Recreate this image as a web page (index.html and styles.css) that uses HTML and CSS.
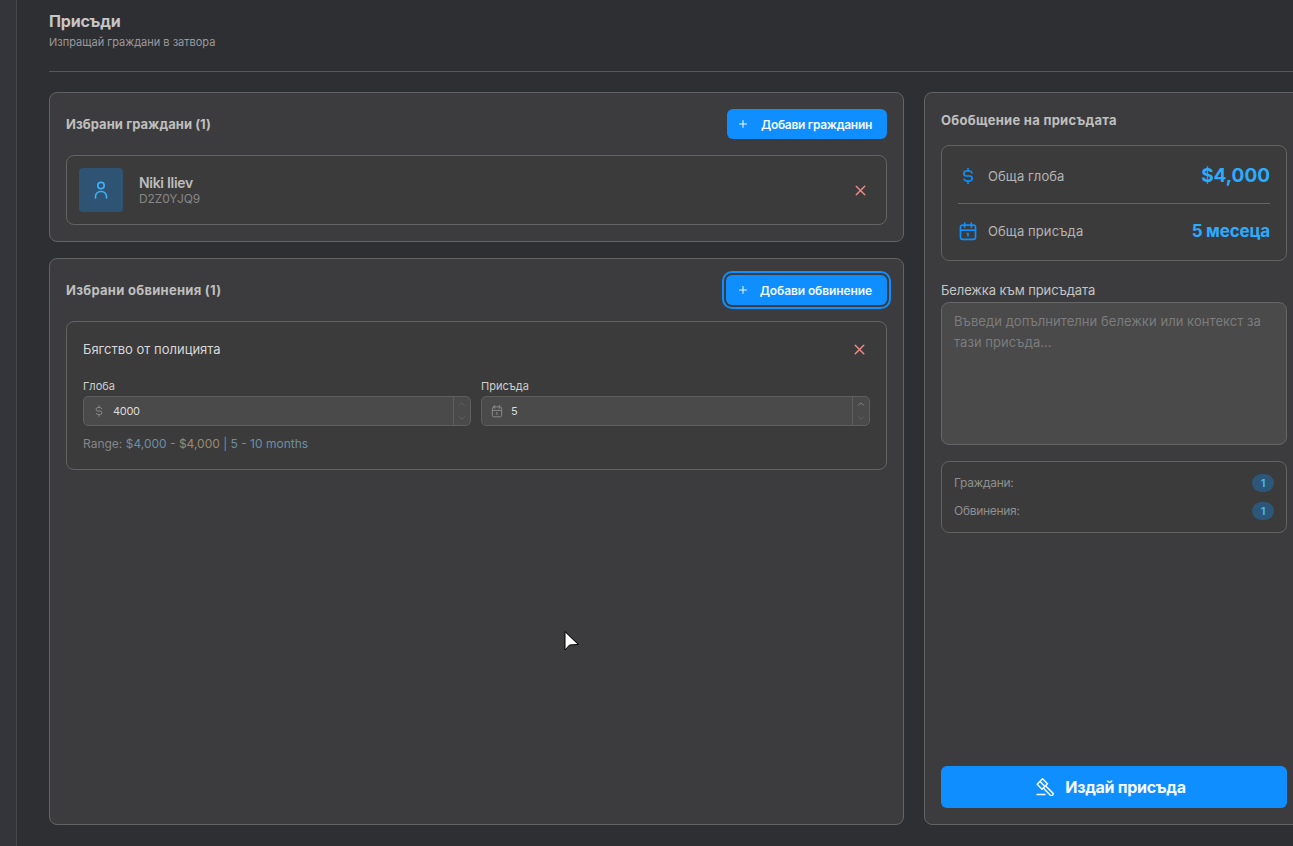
FILE: index.html
```html
<!DOCTYPE html>
<html lang="bg">
<head>
    <meta charset="UTF-8">
    <title>Присъди</title>
    <link rel="stylesheet" href="styles.css">
</head>
<body>
    <div class="rail"></div>
    <main class="page">
        <header class="page-head">
            <h1>Присъди</h1>
            <p>Изпращай граждани в затвора</p>
        </header>

        <div class="columns">
            <div class="left-col">
                <!-- Citizens -->
                <section class="card citizens-card">
                    <div class="card-head">
                        <h2>Избрани граждани (1)</h2>
                        <button class="add-btn">
                            <svg viewBox="0 0 24 24"><path d="M12 5v14M5 12h14"/></svg>
                            Добави гражданин
                        </button>
                    </div>
                    <div class="citizen">
                        <div class="avatar">
                            <svg viewBox="0 0 20 20"><circle cx="10" cy="5.6" r="3.2"/><path d="M4.5 18v-1.5a5 5 0 0 1 5-5h1a5 5 0 0 1 5 5V18"/></svg>
                        </div>
                        <div class="citizen-info">
                            <div class="citizen-name">Niki Iliev</div>
                            <div class="citizen-id">D2Z0YJQ9</div>
                        </div>
                        <svg class="remove" viewBox="0 0 24 24"><path d="M18 6 6 18M6 6l12 12"/></svg>
                    </div>
                </section>

                <!-- Charges -->
                <section class="card charges-card">
                    <div class="card-head">
                        <h2>Избрани обвинения (1)</h2>
                        <button class="add-btn focused">
                            <svg viewBox="0 0 24 24"><path d="M12 5v14M5 12h14"/></svg>
                            Добави обвинение
                        </button>
                    </div>
                    <div class="charge">
                        <div class="charge-head">
                            <span class="charge-title">Бягство от полицията</span>
                            <svg class="remove" viewBox="0 0 24 24"><path d="M18 6 6 18M6 6l12 12"/></svg>
                        </div>
                        <div class="charge-fields">
                            <div class="field">
                                <label>Глоба</label>
                                <div class="number-input">
                                    <svg class="input-icon" viewBox="0 0 24 24"><path d="M16.7 8A3 3 0 0 0 14 6h-4a3 3 0 0 0 0 6h4a3 3 0 0 1 0 6h-4a3 3 0 0 1-2.7-2"/><path d="M12 3v3m0 12v3"/></svg>
                                    <span class="input-value">4000</span>
                                    <div class="stepper">
                                        <span><svg viewBox="0 0 24 24"><path d="m6 15 6-6 6 6"/></svg></span>
                                        <span><svg viewBox="0 0 24 24"><path d="m6 9 6 6 6-6"/></svg></span>
                                    </div>
                                </div>
                            </div>
                            <div class="field">
                                <label>Присъда</label>
                                <div class="number-input">
                                    <svg class="input-icon" viewBox="0 0 24 24"><rect x="4" y="5" width="16" height="17" rx="2.5"/><path d="M16 2.5v5M8 2.5v5M4 11h16M11 15h1v3"/></svg>
                                    <span class="input-value">5</span>
                                    <div class="stepper">
                                        <span><svg class="on" viewBox="0 0 24 24"><path d="m6 15 6-6 6 6"/></svg></span>
                                        <span><svg viewBox="0 0 24 24"><path d="m6 9 6 6 6-6"/></svg></span>
                                    </div>
                                </div>
                            </div>
                        </div>
                        <div class="range">Range: <span class="blue">$4,000</span> - <span class="orange">$4,000</span> <span class="blue">| 5 - 10 months</span></div>
                    </div>
                </section>
            </div>

            <!-- Summary -->
            <aside class="card summary-card">
                <h2>Обобщение на присъдата</h2>
                <div class="totals">
                    <div class="total-row">
                        <svg viewBox="0 0 24 24"><path d="M16.7 8A3 3 0 0 0 14 6h-4a3 3 0 0 0 0 6h4a3 3 0 0 1 0 6h-4a3 3 0 0 1-2.7-2"/><path d="M12 3v3m0 12v3"/></svg>
                        <span class="total-label">Обща глоба</span>
                        <span class="total-value big">$4,000</span>
                    </div>
                    <div class="total-row">
                        <svg viewBox="0 0 24 24"><rect x="3" y="5" width="18" height="17" rx="2.5"/><path d="M16 2.5v5M8 2.5v5M3 11h18M11 15h1v3"/></svg>
                        <span class="total-label">Обща присъда</span>
                        <span class="total-value">5 месеца</span>
                    </div>
                </div>

                <div class="note-label">Бележка към присъдата</div>
                <textarea class="note" placeholder="Въведи допълнителни бележки или контекст за тази присъда..."></textarea>

                <div class="counts">
                    <div class="count-row"><span>Граждани:</span><b class="badge">1</b></div>
                    <div class="count-row"><span>Обвинения:</span><b class="badge">1</b></div>
                </div>

                <button class="submit-btn">
                    <svg viewBox="0 0 18 18"><path d="M6.5.8l5 5-5.5 5.4-4.8-5z"/><path d="M4 3.5l5 5"/><path d="M9.5 7.8l7.1 7.1a1.6 1.6 0 0 1-2.3 2.3L7.3 10"/><path d="M1 16.5h8"/></svg>
                    Издай присъда
                </button>
            </aside>
        </div>
    </main>

    <!-- mouse pointer caught in the screenshot -->
    <svg class="cursor" viewBox="0 0 16 21"><path d="M1 1v18l4.5-5 8.5-.5z" fill="#fff" stroke="#000" stroke-width="1"/></svg>
</body>
</html>
```

FILE: styles.css
```css
:root {
    --blue: #0f8fff;
    --light-blue: #2bacff;
    --line: #636363;
    --text: #c4c4c4;
    --muted: #8e8e8e;
    --panel: #3c3c3e;
    --inner: #3b3b3b;
    --field: #4a4a4a;
}

* {
    margin: 0;
    padding: 0;
    box-sizing: border-box;
    font-family: 'Inter', 'Noto Sans', sans-serif;
}

body {
    width: 1293px;
    height: 846px;
    overflow: hidden;
    display: flex;
    background: #2e2f33;
    color: var(--text);
}

svg {
    fill: none;
    stroke: currentColor;
    stroke-width: 2;
    stroke-linecap: round;
    stroke-linejoin: round;
    flex-shrink: 0;
}

.rail {
    width: 17px;
    flex-shrink: 0;
    background: #33353a;
    border-right: 1px solid #45464a;
}

.page {
    flex-shrink: 0;
    width: 1287px;
    padding: 13px 0 21px 32px;
    display: flex;
    flex-direction: column;
}

.page-head {
    height: 59px;
    border-bottom: 1px solid #57585b;
}

.page-head h1 {
    font-size: 16px;
    line-height: 17px;
    font-weight: 700;
    letter-spacing: -0.2px;
    color: #c6c6c6;
}

.page-head p {
    margin-top: 4px;
    font-size: 11px;
    line-height: 16px;
    color: #9a9a9c;
}

.columns {
    margin-top: 20px;
    display: flex;
    gap: 20px;
    height: 733px;
}

.left-col {
    width: 855px;
    display: flex;
    flex-direction: column;
    gap: 16px;
}

.card {
    background: var(--panel);
    border: 1px solid var(--line);
    border-radius: 8px;
    padding: 16px;
}

.card h2 {
    font-size: 13px;
    font-weight: 700;
    letter-spacing: 0.28px;
    color: #bfbfbf;
}

.citizens-card h2 {
    letter-spacing: 0.05px;
}

.card-head {
    display: flex;
    align-items: center;
    justify-content: space-between;
    margin-bottom: 16px;
}

.add-btn {
    display: flex;
    align-items: center;
    gap: 12px;
    height: 30px;
    padding: 0 15px 0 10px;
    border: none;
    border-radius: 6px;
    background: var(--blue);
    color: #f2f8ff;
    font-size: 12px;
    font-weight: 600;
    letter-spacing: -0.3px;
}

.add-btn svg {
    width: 12px;
    height: 12px;
    stroke-width: 2;
}

.add-btn.focused {
    gap: 11px;
    padding-left: 11px;
    letter-spacing: -0.1px;
    outline: 2px solid var(--blue);
    outline-offset: 2px;
}

.citizen {
    display: flex;
    align-items: center;
    height: 70px;
    padding: 0 12px;
    background: var(--inner);
    border: 1px solid var(--line);
    border-radius: 8px;
}

.avatar {
    width: 44px;
    height: 44px;
    border-radius: 4px;
    background: #2f5473;
    color: #3fb0f7;
    display: flex;
    align-items: center;
    justify-content: center;
}

.avatar svg {
    width: 20px;
    height: 20px;
    stroke-width: 1.6;
}

.citizen-info {
    flex: 1;
    margin-left: 16px;
    margin-top: -1px;
}

.citizen-name {
    font-size: 14px;
    line-height: 17px;
    font-weight: 600;
    letter-spacing: -0.3px;
    color: #bdbdbd;
}

.citizen-id {
    font-size: 12px;
    line-height: 15px;
    letter-spacing: -0.1px;
    color: #878787;
}

.remove {
    width: 17px;
    height: 17px;
    margin-right: 5px;
    color: #f08a8a;
}

.charges-card {
    flex: 1;
}

.charge {
    height: 149px;
    padding: 16px;
    background: var(--inner);
    border: 1px solid var(--line);
    border-radius: 8px;
}

.charge-head {
    display: flex;
    align-items: center;
    justify-content: space-between;
    height: 22px;
}

.charge-head .remove {
    margin-right: 2px;
}

.charge-title {
    font-size: 13px;
    color: #d8d8d8;
}

.charge-fields {
    display: grid;
    grid-template-columns: 388px 1fr;
    gap: 10px;
    margin-top: 19px;
}

.field label {
    display: block;
    font-size: 11px;
    line-height: 14px;
    margin-bottom: 3px;
    color: #cfcfcf;
}

.number-input {
    height: 30px;
    display: flex;
    align-items: center;
    background: var(--field);
    border: 1px solid #5e5e5e;
    border-radius: 5px;
    padding-left: 8px;
}

.input-icon {
    width: 14px;
    height: 14px;
    stroke-width: 1.7;
    color: #8a8a8a;
}

.input-value {
    flex: 1;
    margin-left: 7px;
    font-size: 11px;
    letter-spacing: -0.3px;
    color: #dcdcdc;
}

.stepper {
    width: 17px;
    height: 100%;
    border-left: 1px solid #5e5e5e;
    display: flex;
    flex-direction: column;
    color: #6f6f6f;
}

.stepper span {
    flex: 1;
    display: flex;
    align-items: center;
    justify-content: center;
}

.stepper svg {
    width: 10px;
    height: 10px;
    stroke-width: 1.5;
}

.stepper svg.on {
    color: #a8a8a8;
}

.range {
    margin-top: 10px;
    font-size: 12px;
    line-height: 15px;
    color: #868686;
}

.range .blue {
    color: #6d8ea6;
}

.range .orange {
    color: #9a8a70;
}

.summary-card {
    width: 380px;
    flex-shrink: 0;
    display: flex;
    flex-direction: column;
}

.summary-card h2 {
    height: 22px;
    line-height: 22px;
}

.totals {
    width: 346px;
    height: 116px;
    margin-top: 14px;
    padding: 0 16px;
    background: var(--inner);
    border: 1px solid var(--line);
    border-radius: 8px;
}

.total-row {
    display: flex;
    align-items: center;
    height: 56px;
    padding-bottom: 3px;
    color: var(--blue);
}

.total-row:first-child {
    height: 58px;
    padding: 2px 0 0;
    border-bottom: 1px solid var(--line);
}

.total-row svg {
    width: 20px;
    height: 20px;
    margin-right: 10px;
}

.total-label {
    flex: 1;
    font-size: 13px;
    letter-spacing: 0.1px;
    color: #b4b4b4;
}

.total-value {
    font-size: 17px;
    font-weight: 700;
    letter-spacing: -0.2px;
    color: var(--light-blue);
}

.total-value.big {
    font-size: 19px;
    letter-spacing: 0;
}

.note-label {
    margin-top: 21px;
    font-size: 13px;
    line-height: 16px;
    letter-spacing: -0.1px;
    color: #c4c4c4;
}

.note {
    display: block;
    width: 346px;
    height: 143px;
    margin-top: 4px;
    padding: 8px 12px;
    resize: none;
    background: var(--field);
    border: 1px solid #666;
    border-radius: 8px;
    font-size: 13px;
    line-height: 21px;
    letter-spacing: 0.05px;
    color: #ddd;
}

.note::placeholder {
    color: #7c7c7c;
    opacity: 1;
}

.counts {
    width: 346px;
    height: 72px;
    margin-top: 16px;
    padding: 7px 12px 0;
    background: var(--inner);
    border: 1px solid var(--line);
    border-radius: 8px;
}

.count-row {
    display: flex;
    align-items: center;
    justify-content: space-between;
    height: 28px;
    font-size: 12px;
    letter-spacing: -0.3px;
    color: #8f8f8f;
}

.count-row span {
    margin-bottom: 2px;
}

.badge {
    width: 22px;
    height: 18px;
    border-radius: 9px;
    background: #2d5778;
    color: #45b7ff;
    font-size: 10px;
    line-height: 18px;
    text-align: center;
    font-weight: 700;
}

.submit-btn {
    margin-top: auto;
    width: 346px;
    height: 42px;
    padding-right: 6px;
    display: flex;
    align-items: center;
    justify-content: center;
    gap: 11px;
    border: none;
    border-radius: 6px;
    background: var(--blue);
    color: #f5faff;
    font-size: 16px;
    font-weight: 700;
    letter-spacing: -0.3px;
}

.submit-btn svg {
    width: 18px;
    height: 18px;
    stroke-width: 1.5;
}

.cursor {
    position: absolute;
    left: 564px;
    top: 631px;
    width: 16px;
    height: 21px;
}
```
